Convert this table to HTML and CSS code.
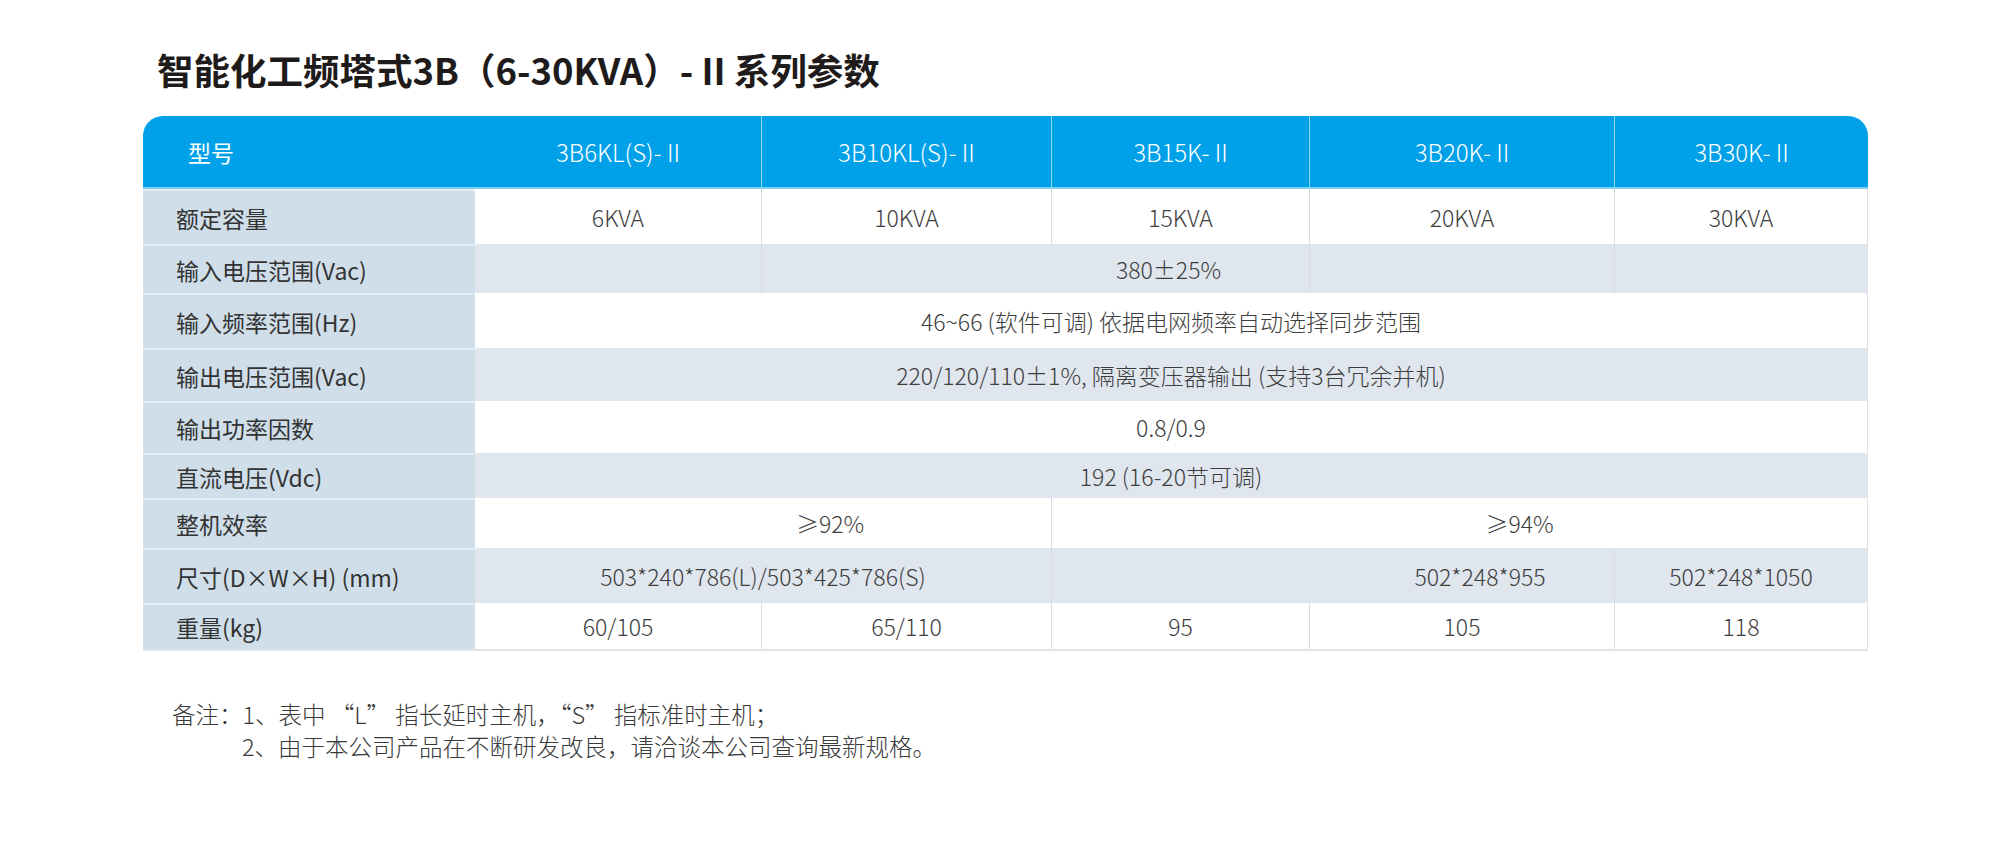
FILE: index.html
```html
<!DOCTYPE html>
<html lang="zh-CN">
<head>
<meta charset="utf-8">
<title>智能化工频塔式3B（6-30KVA）- II 系列参数</title>
<link rel="stylesheet" href="styles.css">
</head>
<body>
<div class="page">
  <h1 class="title">智能化工频塔式3B（6-30KVA）- II 系列参数</h1>

  <div class="spec">
    <div class="row head">
      <div class="cell label">型号</div>
      <div class="cell">3B6KL(S)- II</div>
      <div class="cell sep">3B10KL(S)- II</div>
      <div class="cell sep">3B15K- II</div>
      <div class="cell sep">3B20K- II</div>
      <div class="cell sep">3B30K- II</div>
    </div>

    <div class="row">
      <div class="cell label">额定容量</div>
      <div class="cell">6KVA</div>
      <div class="cell sep">10KVA</div>
      <div class="cell sep">15KVA</div>
      <div class="cell sep">20KVA</div>
      <div class="cell sep end">30KVA</div>
    </div>

    <div class="row alt">
      <div class="cell label">输入电压范围(Vac)</div>
      <div class="cell"></div>
      <div class="cell sep span2 shift-380">380±25%</div>
      <div class="cell sep"></div>
      <div class="cell sep end"></div>
    </div>

    <div class="row">
      <div class="cell label">输入频率范围(Hz)</div>
      <div class="cell span5 end">46~66 (软件可调) 依据电网频率自动选择同步范围</div>
    </div>

    <div class="row alt">
      <div class="cell label">输出电压范围(Vac)</div>
      <div class="cell span5 end">220/120/110±1%, 隔离变压器输出 (支持3台冗余并机)</div>
    </div>

    <div class="row">
      <div class="cell label">输出功率因数</div>
      <div class="cell span5 end">0.8/0.9</div>
    </div>

    <div class="row alt">
      <div class="cell label">直流电压(Vdc)</div>
      <div class="cell span5 end">192 (16-20节可调)</div>
    </div>

    <div class="row">
      <div class="cell label">整机效率</div>
      <div class="cell span2 shift-92">≥92%</div>
      <div class="cell sep span3 end shift-94">≥94%</div>
    </div>

    <div class="row alt">
      <div class="cell label">尺寸(D×W×H) (mm)</div>
      <div class="cell span2">503*240*786(L)/503*425*786(S)</div>
      <div class="cell sep span2 shift-955">502*248*955</div>
      <div class="cell sep end">502*248*1050</div>
    </div>

    <div class="row last">
      <div class="cell label">重量(kg)</div>
      <div class="cell">60/105</div>
      <div class="cell sep">65/110</div>
      <div class="cell sep">95</div>
      <div class="cell sep">105</div>
      <div class="cell sep end">118</div>
    </div>
  </div>

  <div class="notes">
    <p class="note"><span class="note-key">备注：</span>1、表中 “L” 指长延时主机，“S” 指标准时主机；</p>
    <p class="note note-indent">2、由于本公司产品在不断研发改良，请洽谈本公司查询最新规格。</p>
  </div>
</div>
</body>
</html>
```

FILE: styles.css
```css
* { box-sizing: border-box; }

html, body {
  margin: 0;
  padding: 0;
  background: #ffffff;
}

body {
  font-family: "Noto Sans CJK SC", "Noto Sans", "Liberation Sans", sans-serif;
  color: #333333;
}

.page {
  padding: 45px 0 0 143px;
}

.title {
  margin: 0 0 21px 14px;
  font-size: 36.5px;
  line-height: 50px;
  font-weight: 700;
  color: #1e1b1a;
  letter-spacing: 0;
}

.spec {
  display: grid;
  width: 1725px;
  grid-template-columns: 332px 286px 290px 258px 305px 254px;
  grid-template-rows: 73px 55px 49px 55px 53px 52px 45px 50px 55px 46px;
  border-bottom: 2px solid #e2e5e8;
  box-sizing: content-box;
}

.row { display: contents; }

.cell {
  display: flex;
  align-items: center;
  justify-content: center;
  font-size: 23px;
  font-weight: 300;
  color: #3d3d3d;
  background: #ffffff;
  white-space: nowrap;
}

.row.alt .cell { background: #dfe6ed; }

.cell.label {
  justify-content: flex-start;
  padding-left: 33px;
  background: #cfdee9;
  border-top: 2px solid #e4eef5;
  font-weight: 400;
  color: #333333;
}

.row.alt .cell.label { background: #cfdee9; }

.cell.sep { border-left: 1px solid #d9dcdf; }
.cell.end { border-right: 1px solid #e0e3e6; }

.span2 { grid-column: span 2; }
.span3 { grid-column: span 3; }
.span5 { grid-column: span 5; }

.shift-380 { padding-left: 266px; }
.shift-92 { padding-left: 134px; }
.shift-94 { padding-left: 120px; }
.shift-955 { padding-left: 294px; }

/* header */
.row.head .cell {
  background: #00a1e9;
  color: #ffffff;
  font-size: 24px;
  font-weight: 300;
  border-top: 0;
  border-bottom: 2px solid #7fd0f4;
}

.row.head .cell.sep { border-left: 1px solid #8ed6f5; }

.row.head .cell.label {
  padding-left: 45px;
  font-size: 23px;
  border-top-left-radius: 20px;
  font-weight: 400;
}

.row.head .cell:last-child { border-top-right-radius: 20px; }

/* notes */
.notes {
  margin: 47px 0 0 29px;
}

.note {
  margin: 0;
  font-size: 23.5px;
  line-height: 32px;
  font-weight: 300;
  color: #3a3a3a;
  white-space: nowrap;
}

.note-indent { padding-left: 70px; }
```
